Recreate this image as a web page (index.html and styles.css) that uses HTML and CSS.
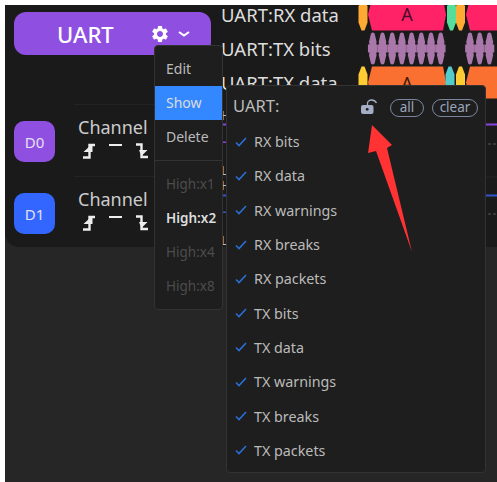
FILE: index.html
```html
<!DOCTYPE html>
<html lang="en">
<head>
<meta charset="utf-8">
<title>UART</title>
<link rel="stylesheet" href="styles.css">
</head>
<body>
<div class="app">
  <div class="panel">
    <aside class="sidebar">
      <div class="decoder">
        <span class="decoder-name">UART</span>
        <svg class="gear" viewBox="0 0 24 24"><path d="M19.14 12.94c.04-.3.06-.61.06-.94 0-.32-.02-.64-.07-.94l2.03-1.58a.49.49 0 0 0 .12-.61l-1.92-3.32a.488.488 0 0 0-.59-.22l-2.39.96c-.5-.38-1.03-.7-1.62-.94l-.36-2.54a.484.484 0 0 0-.48-.41h-3.84c-.24 0-.43.17-.47.41l-.36 2.54c-.59.24-1.13.57-1.62.94l-2.39-.96c-.22-.08-.47 0-.59.22L2.74 8.87c-.12.21-.08.47.12.61l2.03 1.58c-.05.3-.09.63-.09.94s.02.64.07.94l-2.03 1.58a.49.49 0 0 0-.12.61l1.92 3.32c.12.22.37.29.59.22l2.39-.96c.5.38 1.03.7 1.62.94l.36 2.54c.05.24.24.41.48.41h3.84c.24 0 .44-.17.47-.41l.36-2.54c.59-.24 1.13-.56 1.62-.94l2.39.96c.22.08.47 0 .59-.22l1.92-3.32c.12-.22.07-.47-.12-.61l-2.01-1.58zM12 15.6c-1.98 0-3.6-1.62-3.6-3.6s1.62-3.6 3.6-3.6 3.6 1.62 3.6 3.6-1.62 3.6-3.6 3.6z"/></svg>
        <svg class="chevron" viewBox="0 0 12 6"><path d="M1 1l5 3.6L11 1"/></svg>
      </div>
      <div class="channel channel-first">
        <div class="badge badge-purple">D0</div>
        <div class="channel-info">
          <div class="channel-name">Channel</div>
          <div class="triggers">
            <svg class="trig" viewBox="0 0 13 16"><path class="trig-line" d="M0 14.500h6.500V2H12"/><path class="trig-head" d="M0.500 9L7.500 2.500l2 0 0 6.500z"/></svg>
            <span class="trig-high"></span>
            <svg class="trig" viewBox="0 0 13 16"><path class="trig-line" d="M1 1.500h5.500V14H13"/><path class="trig-head" d="M4 7h8.500L6.500 13z"/></svg>
          </div>
        </div>
      </div>
      <div class="channel">
        <div class="badge badge-blue">D1</div>
        <div class="channel-info">
          <div class="channel-name">Channel</div>
          <div class="triggers">
            <svg class="trig" viewBox="0 0 13 16"><path class="trig-line" d="M0 14.500h6.500V2H12"/><path class="trig-head" d="M0.500 9L7.500 2.500l2 0 0 6.500z"/></svg>
            <span class="trig-high"></span>
            <svg class="trig" viewBox="0 0 13 16"><path class="trig-line" d="M1 1.500h5.500V14H13"/><path class="trig-head" d="M4 7h8.500L6.500 13z"/></svg>
          </div>
        </div>
      </div>
    </aside>
    <section class="traces">
      <svg class="waves" viewBox="220 5 277 242">
        <defs>
          <path id="pulse" d="M-1.500-16h3L4.500-8V8L1.500 16h-3L-4.500 8V-8z"/>
          <path id="bump" d="M0-16C1.500-16 2-15 2.300-13L3.800-6.500 3.300-4H4.850V4H3.300L3.800 6.500 2.300 13C2 15 1.500 16 0 16C-1.500 16-2 15-2.300 13L-3.800 6.500-3.300 4H-4.850V-4H-3.300L-3.800-6.500-2.300-13C-2-15-1.500-16 0-16z"/>
        </defs>
        <use href="#pulse" x="363" y="14" class="w-amber"/>
        <path class="w-red" d="M372-2h71l3 16-3 16h-71l-4-16z"/>
        <text x="407" y="20" class="w-letter">A</text>
        <use href="#pulse" x="451.500" y="14" class="w-green"/>
        <use href="#pulse" x="460.500" y="14" class="w-amber"/>
        <path class="w-red" d="M470-2h27v32h-27l-4-16z"/>

        <use href="#bump" x="372.800" y="48" class="w-bits"/>
        <use href="#bump" x="382.500" y="48" class="w-bits"/>
        <use href="#bump" x="392.200" y="48" class="w-bits"/>
        <use href="#bump" x="401.900" y="48" class="w-bits"/>
        <use href="#bump" x="411.600" y="48" class="w-bits"/>
        <use href="#bump" x="421.300" y="48" class="w-bits"/>
        <use href="#bump" x="431" y="48" class="w-bits"/>
        <use href="#bump" x="440.700" y="48" class="w-bits"/>
        <use href="#bump" x="470" y="48" class="w-bits"/>
        <use href="#bump" x="479.700" y="48" class="w-bits"/>
        <use href="#bump" x="489.400" y="48" class="w-bits"/>

        <use href="#pulse" x="363" y="82" class="w-yellow"/>
        <path class="w-orange" d="M372 66h71l3 16-3 16h-71l-4-16z"/>
        <text x="407" y="89" class="w-letter w-letter-dark">A</text>
        <use href="#pulse" x="450" y="82" class="w-cyan"/>
        <use href="#pulse" x="460.500" y="82" class="w-yellow"/>
        <path class="w-orange" d="M470 66h27v32h-27l-4-16z"/>

        <rect x="220" y="123" width="277" height="2" class="w-purple-line"/>
        <rect x="222" y="141" width="4" height="1.500" class="w-purple-line"/>
        <rect x="488" y="143" width="3" height="1" class="w-dash"/>
        <rect x="493" y="143" width="3" height="1" class="w-dash"/>
        <rect x="220" y="176" width="277" height="1" class="w-rule"/>
        <rect x="220" y="194" width="277" height="2" class="w-blue-line"/>
        <rect x="222" y="211" width="4" height="1.500" class="w-blue-line"/>
        <rect x="488" y="213" width="3" height="1" class="w-dash"/>
        <rect x="493" y="213" width="3" height="1" class="w-dash"/>
      </svg>
      <ul class="trace-labels">
        <li class="trace-label">UART:RX data</li>
        <li class="trace-label">UART:TX bits</li>
        <li class="trace-label">UART:TX data</li>
        <li class="level level-h1">High</li>
        <li class="level level-l1">Low</li>
        <li class="level level-h2">High</li>
        <li class="level level-l2">Low</li>
      </ul>
    </section>
  </div>

  <nav class="menu">
    <div class="menu-group menu-group-top">
      <div class="menu-item">Edit</div>
      <div class="menu-item menu-item-active">Show</div>
      <div class="menu-item">Delete</div>
    </div>
    <div class="menu-group">
      <div class="menu-item menu-item-off">High:x1</div>
      <div class="menu-item menu-item-on">High:x2</div>
      <div class="menu-item menu-item-off">High:x4</div>
      <div class="menu-item menu-item-off">High:x8</div>
    </div>
  </nav>

  <div class="popover">
    <header class="pop-head">
      <span class="pop-title">UART:</span>
      <svg class="lock" viewBox="0 0 18 16">
        <path class="lock-shackle" d="M7.500 6V4.500C7.500 2.500 9.500 1 11.500 1S15.500 2 16.500 4"/>
        <rect class="lock-body" x="1" y="6" width="12.500" height="9" rx="2"/>
        <circle class="lock-hole" cx="7.200" cy="10.300" r="1.400"/>
      </svg>
      <span class="pill pill-all">all</span>
      <span class="pill">clear</span>
    </header>
    <ul class="pop-list">
      <li class="pop-row"><svg class="check" viewBox="0 0 12 10"><path d="M1 5.500l3 3L11 1"/></svg>RX bits</li>
      <li class="pop-row"><svg class="check" viewBox="0 0 12 10"><path d="M1 5.500l3 3L11 1"/></svg>RX data</li>
      <li class="pop-row"><svg class="check" viewBox="0 0 12 10"><path d="M1 5.500l3 3L11 1"/></svg>RX warnings</li>
      <li class="pop-row"><svg class="check" viewBox="0 0 12 10"><path d="M1 5.500l3 3L11 1"/></svg>RX breaks</li>
      <li class="pop-row"><svg class="check" viewBox="0 0 12 10"><path d="M1 5.500l3 3L11 1"/></svg>RX packets</li>
      <li class="pop-row"><svg class="check" viewBox="0 0 12 10"><path d="M1 5.500l3 3L11 1"/></svg>TX bits</li>
      <li class="pop-row"><svg class="check" viewBox="0 0 12 10"><path d="M1 5.500l3 3L11 1"/></svg>TX data</li>
      <li class="pop-row"><svg class="check" viewBox="0 0 12 10"><path d="M1 5.500l3 3L11 1"/></svg>TX warnings</li>
      <li class="pop-row"><svg class="check" viewBox="0 0 12 10"><path d="M1 5.500l3 3L11 1"/></svg>TX breaks</li>
      <li class="pop-row"><svg class="check" viewBox="0 0 12 10"><path d="M1 5.500l3 3L11 1"/></svg>TX packets</li>
    </ul>
  </div>

  <svg class="annotation" viewBox="0 0 60 140"><path d="M10 0L6 28l8-2L50 127 25 23l5-3z"/></svg>
</div>
</body>
</html>
```

FILE: styles.css
```css
* { box-sizing: border-box; }
html, body { margin: 0; padding: 0; background: #fff; }
body { font-family: "Noto Sans", "Open Sans", sans-serif; overflow: hidden; }
ul { list-style: none; margin: 0; padding: 0; }

.app {
  position: relative;
  margin: 5px 0 0 5px;
  height: 477px;
  background: #262626;
  overflow: hidden;
}
.panel {
  display: grid;
  grid-template-columns: 215px 1fr;
  height: 242px;
  background: #1a1a1a;
  border-bottom-left-radius: 14px;
  overflow: hidden;
}

/* left column */
.sidebar { padding: 7px 0 0 9px; }
.decoder {
  display: flex;
  align-items: center;
  width: 197px;
  height: 43px;
  padding-left: 43px;
  background: #8f50e2;
  border-radius: 12px;
  color: #fff;
}
.decoder-name { width: 93px; font-size: 22px; font-weight: 500; line-height: 1; }
.gear { width: 20px; height: 20px; fill: #fff; }
.chevron { width: 12px; height: 6px; margin-left: 8px; fill: none; stroke: #fff; stroke-width: 2; }

.channel {
  display: flex;
  height: 71px;
  margin-left: 60px;
  padding-top: 16px;
  border-top: 1px solid #232323;
}
.channel-first { margin-top: 49px; height: 72px; }
.badge {
  flex: none;
  width: 41px;
  height: 41px;
  margin-left: -60px;
  border-radius: 10px;
  display: flex;
  align-items: center;
  justify-content: center;
  font-size: 15px;
  color: #e4e0f0;
}
.badge-purple { background: #8f50e2; }
.badge-blue { background: #3366ff; }
.channel-info { margin-left: 23px; margin-top: -5px; }
.channel-name { font-size: 18px; line-height: 23px; color: #ccc; }
.triggers { display: flex; align-items: flex-start; margin-top: 4px; padding-left: 5px; }
.trig { width: 13px; height: 16px; }
.trig-line { fill: none; stroke: #eee; stroke-width: 2.400; }
.trig-head { fill: #eee; }
.trig-high { width: 13px; height: 2px; margin: 1px 13px 0 13px; background: #eee; }

/* traces */
.traces { position: relative; }
.waves { position: absolute; inset: 0; width: 100%; height: 100%; }
.w-amber { fill: #ffaa33; }
.w-green { fill: #55dd99; }
.w-red { fill: #ff2266; }
.w-orange { fill: #f97030; }
.w-yellow { fill: #ffcc33; }
.w-cyan { fill: #55cccc; }
.w-bits { fill: #aa77aa; }
.w-letter { font-family: "Noto Sans", sans-serif; font-size: 18px; fill: #4c0a2c; text-anchor: middle; }
.w-letter-dark { fill: #3a1a08; }
.w-purple-line { fill: #8844dd; }
.w-blue-line { fill: #3355cc; }
.w-dash { fill: #555; }
.w-rule { fill: #242424; }

.trace-labels { position: relative; margin-top: -7px; }
.trace-label { height: 34px; padding-left: 1px; font-size: 18.500px; line-height: 34px; color: #ddd; white-space: nowrap; }
.level { height: 16px; font-size: 13px; line-height: 16px; color: #bbb; padding-left: 1px; }
.level-h1 { margin-top: 7px; }
.level-l1 { margin-top: 39px; }
.level-h2 { margin-top: -1px; }
.level-l2 { margin-top: 39px; }

/* context menu */
.menu {
  position: absolute;
  left: 149px;
  top: 40px;
  width: 69px;
  height: 265px;
  background: #1e1e1e;
  border: 1px solid #333;
  border-radius: 4px;
}
.menu-group { padding-top: 6px; }
.menu-group-top { height: 115px; border-bottom: 1px solid #333; }
.menu-group-top .menu-item { font-size: 14px; }
.menu-item { height: 34px; padding-left: 11px; font-size: 13.500px; line-height: 34px; color: #bbb; white-space: nowrap; }
.menu-item-active { background: #3388ff; color: #ddd; }
.menu-item-off { color: #4c4c4c; }
.menu-item-on { color: #ddd; font-weight: 600; }

/* popover */
.popover {
  position: absolute;
  left: 221px;
  top: 80px;
  width: 260px;
  height: 388px;
  background: #1e1e1e;
  border: 1px solid #333;
  border-radius: 4px;
}
.pop-head { display: flex; align-items: center; height: 38.500px; padding-left: 6px; }
.pop-title { width: 127px; font-size: 16.500px; color: #bbb; }
.lock { width: 18px; height: 16px; margin-top: 3px; }
.lock-shackle { fill: none; stroke: #a3aec6; stroke-width: 1.300; }
.lock-body { fill: #a3aec6; }
.lock-hole { fill: #1e1e1e; }
.pill {
  width: 46px;
  height: 18px;
  margin-left: 8px;
  margin-top: 5px;
  border: 1.500px solid #7a869e;
  border-radius: 9px;
  font-size: 13.500px;
  line-height: 15px;
  text-align: center;
  color: #9aa5bb;
}
.pill-all { width: 34px; margin-left: 12px; }
.pop-row {
  display: flex;
  align-items: center;
  height: 34.300px;
  padding-left: 8px;
  font-size: 14.300px;
  color: #bbb;
  white-space: nowrap;
}
.check { width: 12px; height: 10px; margin-right: 7px; fill: none; stroke: #2a6fd6; stroke-width: 1.600; }

/* red arrow added over the screenshot */
.annotation { position: absolute; left: 357px; top: 120px; width: 60px; height: 140px; fill: #ff3333; }
```
